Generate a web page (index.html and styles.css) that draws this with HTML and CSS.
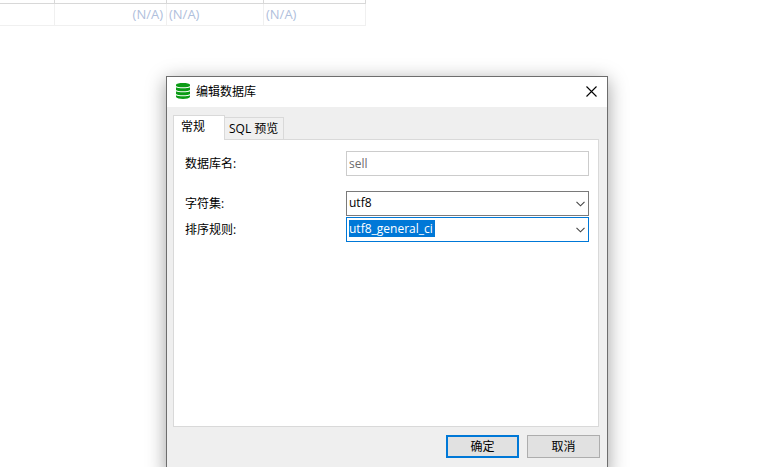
FILE: index.html
```html
<!DOCTYPE html>
<html lang="zh-CN">
<head>
<meta charset="utf-8">
<title>编辑数据库</title>
<link rel="stylesheet" href="styles.css">
</head>
<body>
<table class="grid">
  <colgroup><col class="col-first"><col class="col-second"><col class="col-third"><col class="col-fourth"></colgroup>
  <thead><tr><th></th><th></th><th></th><th></th></tr></thead>
  <tbody><tr><td></td><td class="num">(N/A)</td><td>(N/A)</td><td>(N/A)</td></tr></tbody>
</table>

<section class="dialog" role="dialog" aria-labelledby="dialog-title">
  <header class="titlebar">
    <svg class="db-icon" viewBox="0 0 14 16" aria-hidden="true">
      <path d="M0 2C0 -.6 14 -.6 14 2V3C13 4.700 1 4.700 0 3Z"/>
      <path d="M0 4.300C2 5.600 12 5.600 14 4.300V7C13 8.700 1 8.700 0 7Z"/>
      <path d="M0 8.300C2 9.600 12 9.600 14 8.300V11C13 12.700 1 12.700 0 11Z"/>
      <path d="M0 12.300C2 13.600 12 13.600 14 12.300V14C13 16.600 1 16.600 0 14Z"/>
    </svg>
    <h1 class="title" id="dialog-title">编辑数据库</h1>
    <button class="close" type="button" aria-label="关闭">
      <svg viewBox="0 0 11 11" width="11" height="11"><path d="M.5 .5L10.500 10.500M10.500 .5L.5 10.500"/></svg>
    </button>
  </header>
  <form class="content">
    <div class="tabs" role="tablist">
      <button class="tab tab-active" type="button" role="tab" aria-selected="true">常规</button>
      <button class="tab" type="button" role="tab" aria-selected="false">SQL 预览</button>
    </div>
    <div class="panel" role="tabpanel">
      <div class="row row-name">
        <label for="name">数据库名:</label>
        <input class="field" id="name" type="text" value="sell" disabled>
      </div>
      <div class="row">
        <label for="charset">字符集:</label>
        <div class="combo">
          <select class="field" id="charset"><option>utf8</option></select>
          <svg class="chevron" viewBox="0 0 9 6" aria-hidden="true"><path d="M.5 .8L4.500 4.800L8.500 .8"/></svg>
        </div>
      </div>
      <div class="row">
        <label for="collation">排序规则:</label>
        <div class="combo">
          <select class="field field-current" id="collation"><option>utf8_general_ci</option></select>
          <svg class="chevron" viewBox="0 0 9 6" aria-hidden="true"><path d="M.5 .8L4.500 4.800L8.500 .8"/></svg>
        </div>
      </div>
    </div>
    <footer class="actions">
      <button class="button button-default" type="button">确定</button>
      <button class="button" type="button">取消</button>
    </footer>
  </form>
</section>
</body>
</html>
```
FILE: styles.css
```css
* {
  box-sizing: border-box;
}

body {
  margin: 0;
  height: 100vh;
  overflow: hidden;
  background: #fff;
  color: #000;
  font: 12px/16px "Open Sans", "Noto Sans CJK SC", sans-serif;
}

button,
input,
select {
  font: inherit;
  color: inherit;
  border-radius: 0;
}

.grid {
  width: 366px;
  table-layout: fixed;
  border-collapse: separate;
  border-spacing: 0;
  color: #b0c0dc;
  font-size: 13px;
}

.col-first { width: 55px; }
.col-second { width: 112px; }
.col-third { width: 97px; }

.grid th {
  height: 4px;
  padding: 0;
  border-right: 1px solid #d8d8d8;
  border-bottom: 1px solid #d8d8d8;
}

.grid td {
  height: 22px;
  padding: 0 2px 2px;
  border-right: 1px solid #f0f0f0;
  border-bottom: 1px solid #f0f0f0;
}

.grid .num {
  padding-right: 3px;
  text-align: right;
}

.dialog {
  width: 442px;
  margin: 50px 0 0 166px;
  border: 1px solid #6d6d6d;
  background: #efefef;
  box-shadow: 0 4px 18px rgba(0, 0, 0, 0.38);
}

.titlebar {
  display: flex;
  align-items: center;
  height: 30px;
  padding: 0 10px 2px 9px;
  background: #fff;
}

.db-icon {
  width: 14px;
  height: 16px;
  margin-right: 6px;
  fill: #0c9c16;
}

.title {
  flex: 1;
  margin: 0;
  padding-top: 2px;
  font-size: 12px;
  font-weight: 400;
}

.close {
  display: flex;
  padding: 0;
  border: 0;
  background: none;
}

.close path {
  fill: none;
  stroke: #000;
  stroke-width: 1.1;
}

.content {
  padding: 8px 8px 16px 6px;
}

.tabs {
  display: flex;
  align-items: flex-end;
}

.tab {
  height: 22px;
  padding: 0 5px 0 4px;
  border: 1px solid #d9d9d9;
  border-left: 0;
  border-bottom: 0;
  background: #f0f0f0;
}

.tab-active {
  z-index: 1;
  width: 52px;
  height: 25px;
  margin-bottom: -1px;
  padding: 0 0 2px 7px;
  border-left: 1px solid #d9d9d9;
  background: #fff;
  text-align: left;
}

.panel {
  height: 288px;
  padding: 11px 9px;
  border: 1px solid #d9d9d9;
  background: #fff;
}

.row {
  display: grid;
  grid-template-columns: 1fr 243px;
  align-items: center;
  margin-bottom: 1px;
  padding-left: 2px;
}

.row-name {
  margin-bottom: 15px;
}

.combo {
  position: relative;
}

.field {
  display: block;
  width: 100%;
  height: 25px;
  padding: 0 2px 1px;
  border: 1px solid #7a7a7a;
  background: #fff;
  appearance: none;
}

.field:disabled {
  border-color: #ccc;
  color: #6d6d6d;
}

.field-current {
  border-color: #0078d7;
  color: #fff;
  background: linear-gradient(#0078d7, #0078d7) 2px 2px / 86px 17px no-repeat #fff;
}

.chevron {
  position: absolute;
  top: 10px;
  right: 4px;
  width: 9px;
  height: 6px;
  fill: none;
  stroke: #444;
  stroke-width: 1.1;
  pointer-events: none;
}

.actions {
  display: flex;
  justify-content: flex-end;
  gap: 8px;
  margin-right: -1px;
  padding-top: 8px;
}

.button {
  width: 73px;
  height: 23px;
  padding: 0;
  border: 1px solid #adadad;
  background: #e1e1e1;
}

.button-default {
  border: 2px solid #0078d7;
}
```
